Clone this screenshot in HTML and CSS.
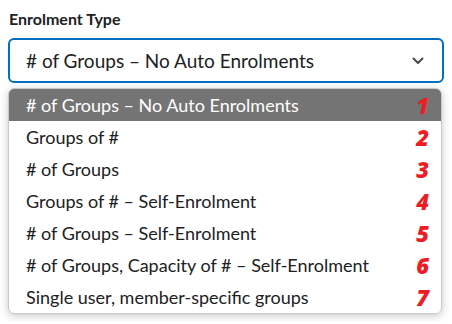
FILE: index.html
```html
<!DOCTYPE html>
<html lang="en">
<head>
  <meta charset="UTF-8">
  <title>Enrolment Type</title>
  <link rel="stylesheet" href="styles.css">
</head>
<body>
  <div class="field">
    <label class="field-label" for="enrolType">Enrolment Type</label>

    <div class="select" id="enrolType">
      <span class="select-value"># of Groups – No Auto Enrolments</span>
      <svg class="chevron" width="12" height="8" viewBox="0 0 12 8">
        <path d="M1.5 1.5 L6 6 L10.5 1.5" fill="none" stroke="#494c4e" stroke-width="2" stroke-linecap="round" stroke-linejoin="round"/>
      </svg>
    </div>

    <ul class="options">
      <li class="option selected"><span># of Groups – No Auto Enrolments</span><em class="num">1</em></li>
      <li class="option"><span>Groups of #</span><em class="num">2</em></li>
      <li class="option"><span># of Groups</span><em class="num">3</em></li>
      <li class="option"><span>Groups of # – Self-Enrolment</span><em class="num">4</em></li>
      <li class="option"><span># of Groups – Self-Enrolment</span><em class="num">5</em></li>
      <li class="option"><span># of Groups, Capacity of # – Self-Enrolment</span><em class="num">6</em></li>
      <li class="option"><span>Single user, member-specific groups</span><em class="num">7</em></li>
    </ul>
  </div>
</body>
</html>
```

FILE: styles.css
```css
* {
  box-sizing: border-box;
}

body {
  margin: 0;
  padding: 8px;
  font-family: Lato, 'Noto Sans', sans-serif;
  color: #202122;
  background: #ffffff;
}

.field-label {
  display: block;
  font-size: 16px;
  font-weight: 700;
  line-height: 18px;
  padding: 2px 0 0 1px;
  margin-bottom: 10px;
}

.select {
  display: flex;
  align-items: center;
  justify-content: space-between;
  height: 45px;
  padding: 0 18px 0 16px;
  border: 2px solid #006fbf;
  border-radius: 6px;
  font-size: 19px;
}

.chevron {
  display: block;
}

.options {
  list-style: none;
  margin: 5px 2px 0 0;
  padding: 0;
  border: 1px solid #c8c8c8;
  border-radius: 6px;
  overflow: hidden;
  box-shadow: 0 2px 8px rgba(0, 0, 0, 0.22);
  font-size: 18px;
}

.option {
  display: flex;
  align-items: center;
  justify-content: space-between;
  height: 32px;
  padding: 0 12px 0 17px;
}

.option.selected {
  background: #747474;
  color: #ffffff;
}

.num {
  font-family: 'Open Sans', sans-serif;
  font-size: 22px;
  font-weight: 800;
  font-style: italic;
  color: #ee1c25;
  line-height: 1;
}
```
